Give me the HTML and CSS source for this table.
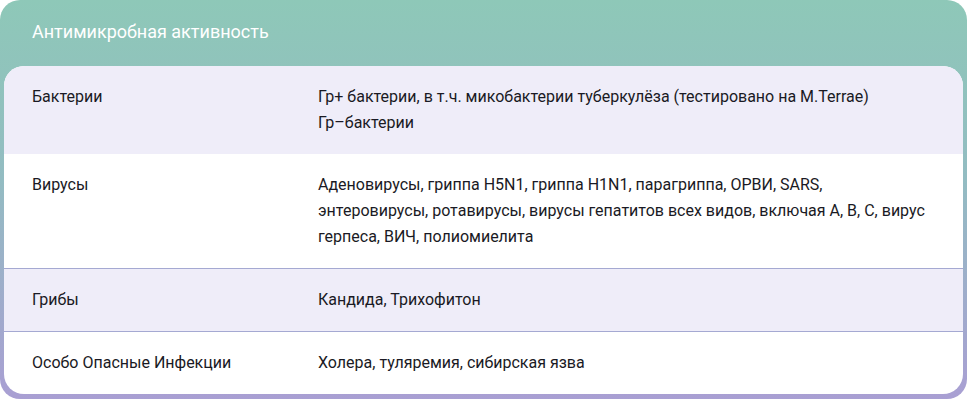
FILE: index.html
```html
<!DOCTYPE html>
<html lang="ru">
<head>
<meta charset="utf-8">
<title>Антимикробная активность</title>
<link rel="stylesheet" href="styles.css">
</head>
<body>
<section class="card">
  <h2 class="card-title">Антимикробная активность</h2>
  <div class="table">
    <div class="row row-tint">
      <div class="label">Бактерии</div>
      <div class="value">Гр+ бактерии, в т.ч. микобактерии туберкулёза (тестировано на M.Terrae)<br>Гр–бактерии</div>
    </div>
    <div class="row">
      <div class="label">Вирусы</div>
      <div class="value">Аденовирусы, гриппа H5N1, гриппа H1N1, парагриппа, ОРВИ, SARS, энтеровирусы, ротавирусы, вирусы гепатитов всех видов, включая A, B, C, вирус герпеса, ВИЧ, полиомиелита</div>
    </div>
    <div class="row row-tint row-line">
      <div class="label">Грибы</div>
      <div class="value">Кандида, Трихофитон</div>
    </div>
    <div class="row row-line">
      <div class="label">Особо Опасные Инфекции</div>
      <div class="value">Холера, туляремия, сибирская язва</div>
    </div>
  </div>
</section>
</body>
</html>
```
FILE: styles.css
```css
html, body {
  margin: 0;
  padding: 0;
  background: #ffffff;
}
body {
  font-family: Roboto, "Noto Sans", sans-serif;
  color: #1a1a24;
}
.card {
  width: 967px;
  box-sizing: border-box;
  padding: 0 4px 5px 4px;
  border-radius: 20px;
  background: linear-gradient(180deg, #8ec8b8 0%, #93bcc2 45%, #a99fd3 100%);
}
.card-title {
  margin: 0;
  height: 66px;
  box-sizing: border-box;
  padding: 20px 0 0 28px;
  font-size: 18px;
  font-weight: 400;
  line-height: 24px;
  color: #ffffff;
}
.table {
  background: #ffffff;
  border-radius: 20px;
  overflow: hidden;
}
.row {
  display: grid;
  grid-template-columns: 286px 1fr;
  padding: 18px 32px 18px 28px;
  font-size: 16px;
  line-height: 26px;
}
.row-tint {
  background: #efedf9;
}
.row-line {
  border-top: 1px solid #a5a9d2;
}
```
